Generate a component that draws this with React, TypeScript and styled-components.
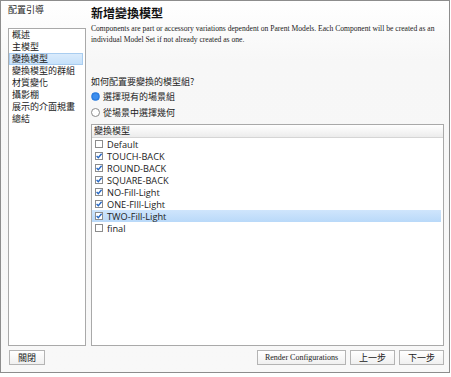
import React from 'react';
import styled, { createGlobalStyle } from 'styled-components';

const GlobalStyle = createGlobalStyle`
  html, body {
    margin: 0;
    padding: 0;
    background: #ffffff;
  }
  body {
    font-family: "Noto Sans", "Noto Sans CJK TC", sans-serif;
  }
`;

const cjk = `"Noto Sans CJK TC", "Noto Sans", sans-serif`;
const latin = `"Open Sans", "Noto Sans CJK TC", sans-serif`;
const serif = `"Liberation Serif", "Noto Sans CJK TC", serif`;

const Window = styled.div`
  width: 450px;
  height: 373px;
  box-sizing: border-box;
  border: 1px solid #8d8d8d;
  background: linear-gradient(#ffffff 0px, #f7f7f7 60px, #f8f8f8 100%);
  display: flex;
  flex-direction: column;
  padding: 0 5px 4px 7px;
`;

const Main = styled.div`
  flex: 1;
  display: flex;
  gap: 4px;
  min-height: 0;
`;

const LeftCol = styled.div`
  width: 78px;
  display: flex;
  flex-direction: column;
`;

const WindowTitle = styled.div`
  height: 27px;
  font-family: ${cjk};
  font-size: 9px;
  line-height: 18px;
  color: #222;
`;

const Nav = styled.div`
  flex: 1;
  background: #ffffff;
  border: 1px solid #a9a9a9;
  padding: 0 2px 0 0;
`;

const NavItem = styled.div<{ $active?: boolean }>`
  height: 12px;
  line-height: 12px;
  font-family: ${cjk};
  font-size: 9px;
  color: #222;
  padding-left: 3px;
  box-sizing: border-box;
  background: ${p => (p.$active ? 'linear-gradient(#dcecfc, #c4e0fa)' : 'transparent')};
  box-shadow: ${p => (p.$active ? 'inset 0 0 0 1px #a9cdf0' : 'none')};
`;

const RightCol = styled.div`
  flex: 1;
  display: flex;
  flex-direction: column;
  min-width: 0;
  padding-left: 1px;
`;

const Heading = styled.h1`
  margin: 4px 0 0;
  font-family: ${cjk};
  font-size: 12px;
  line-height: 15px;
  font-weight: 700;
  color: #111;
`;

const Description = styled.p`
  margin: 3px 0 0;
  font-family: ${serif};
  font-size: 7.6px;
  line-height: 11px;
  color: #222;
  white-space: nowrap;
`;

const Question = styled.div`
  margin-top: 31px;
  font-family: ${cjk};
  font-size: 9px;
  line-height: 12px;
  color: #222;
`;

const RadioRow = styled.label`
  display: flex;
  align-items: center;
  gap: 3px;
  height: 16px;
  font-family: ${cjk};
  font-size: 9px;
  color: #222;
`;

const RadioDot = styled.span<{ $on?: boolean }>`
  width: 9px;
  height: 9px;
  box-sizing: border-box;
  border-radius: 50%;
  border: 1px solid ${p => (p.$on ? '#2d7fe0' : '#8a8a8a')};
  background: ${p => (p.$on ? 'radial-gradient(circle, #3d8fef 0 45%, #2a7ae0 70%)' : '#ffffff')};
`;

const ListBox = styled.div`
  flex: 1;
  margin-top: 4px;
  background: #ffffff;
  border: 1px solid #a9a9a9;
  display: flex;
  flex-direction: column;
`;

const ListHeader = styled.div`
  height: 12px;
  line-height: 12px;
  padding-left: 2px;
  font-family: ${cjk};
  font-size: 9px;
  color: #222;
  background: linear-gradient(#ffffff, #ececec);
  border-bottom: 1px solid #d5d5d5;
`;

const ListRow = styled.div<{ $selected?: boolean }>`
  height: 12px;
  display: flex;
  align-items: center;
  gap: 4px;
  padding-left: 3px;
  margin-right: 2px;
  font-family: ${latin};
  font-size: 9.2px;
  color: #222;
  background: ${p => (p.$selected ? 'linear-gradient(#cfe5fc, #b9d9f9)' : 'transparent')};
  &:first-of-type {
    margin-top: 1px;
  }
`;

const Footer = styled.div`
  display: flex;
  align-items: center;
  gap: 4px;
  height: 22px;
  padding-left: 1px;
`;

const Spacer = styled.div`
  flex: 1;
`;

const Button = styled.button<{ $serif?: boolean; $w: number }>`
  width: ${p => p.$w}px;
  height: 15px;
  padding: 0;
  border: 1px solid #b4b4b4;
  background: linear-gradient(#ffffff, #f0f0f0);
  font-family: ${p => (p.$serif ? serif : cjk)};
  font-size: ${p => (p.$serif ? '8px' : '9px')};
  color: #222;
  line-height: 13px;
`;

const Check = ({ on }: { on: boolean }) => (
  <svg width="8" height="8" viewBox="0 0 8 8">
    <rect x="0.5" y="0.5" width="7" height="7" fill="#fff" stroke="#8c8c8c" />
    {on && <path d="M1.6 4.1 L3.3 5.8 L6.6 1.8" fill="none" stroke="#2768c4" strokeWidth="1.4" />}
  </svg>
);

const navItems = ['概述', '主模型', '變換模型', '變換模型的群組', '材質變化', '攝影棚', '展示的介面規畫', '總結'];

const models = [
  { name: 'Default', on: false },
  { name: 'TOUCH-BACK', on: true },
  { name: 'ROUND-BACK', on: true },
  { name: 'SQUARE-BACK', on: true },
  { name: 'NO-Fill-Light', on: true },
  { name: 'ONE-FIll-Light', on: true },
  { name: 'TWO-Fill-Light', on: true, selected: true },
  { name: 'final', on: false },
];

const App = () => (
  <>
    <GlobalStyle />
    <Window>
      <Main>
        <LeftCol>
          <WindowTitle>配置引導</WindowTitle>
          <Nav>
            {navItems.map((item, i) => (
              <NavItem key={item} $active={i === 2}>{item}</NavItem>
            ))}
          </Nav>
        </LeftCol>
        <RightCol>
          <Heading>新增變換模型</Heading>
          <Description>
            Components are part or accessory variations dependent on Parent Models. Each Component will be created as an
            <br />
            individual Model Set if not already created as one.
          </Description>
          <Question>如何配置要變換的模型組?</Question>
          <RadioRow><RadioDot $on />選擇現有的場景組</RadioRow>
          <RadioRow><RadioDot />從場景中選擇幾何</RadioRow>
          <ListBox>
            <ListHeader>變換模型</ListHeader>
            {models.map(m => (
              <ListRow key={m.name} $selected={m.selected}>
                <Check on={m.on} />
                {m.name}
              </ListRow>
            ))}
          </ListBox>
        </RightCol>
      </Main>
      <Footer>
        <Button $w={36}>關閉</Button>
        <Spacer />
        <Button $w={89} $serif>Render Configurations</Button>
        <Button $w={45}>上一步</Button>
        <Button $w={45}>下一步</Button>
      </Footer>
    </Window>
  </>
);

export default App;
